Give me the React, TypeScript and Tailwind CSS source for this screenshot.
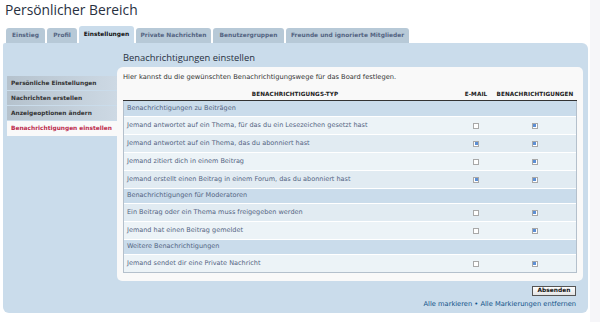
import React from "react";

const tabs = [
  { label: "Einstieg", w: "w-[39px]" },
  { label: "Profil", w: "w-[30px]" },
  { label: "Einstellungen", w: "w-[55px]", active: true },
  { label: "Private Nachrichten", w: "w-[75px]" },
  { label: "Benutzergruppen", w: "w-[71px]" },
  { label: "Freunde und ignorierte Mitglieder", w: "w-[123px]" },
];

const menu = [
  "Persönliche Einstellungen",
  "Nachrichten erstellen",
  "Anzeigeoptionen ändern",
];

type Row =
  | { type: "section"; label: string }
  | { type: "row"; label: string; mail: boolean; notify: boolean; dark: boolean };

const rows: Row[] = [
  { type: "section", label: "Benachrichtigungen zu Beiträgen" },
  { type: "row", label: "Jemand antwortet auf ein Thema, für das du ein Lesezeichen gesetzt hast", mail: false, notify: true, dark: false },
  { type: "row", label: "Jemand antwortet auf ein Thema, das du abonniert hast", mail: true, notify: true, dark: true },
  { type: "row", label: "Jemand zitiert dich in einem Beitrag", mail: false, notify: true, dark: false },
  { type: "row", label: "Jemand erstellt einen Beitrag in einem Forum, das du abonniert hast", mail: true, notify: true, dark: true },
  { type: "section", label: "Benachrichtigungen für Moderatoren" },
  { type: "row", label: "Ein Beitrag oder ein Thema muss freigegeben werden", mail: false, notify: true, dark: true },
  { type: "row", label: "Jemand hat einen Beitrag gemeldet", mail: false, notify: true, dark: false },
  { type: "section", label: "Weitere Benachrichtigungen" },
  { type: "row", label: "Jemand sendet dir eine Private Nachricht", mail: false, notify: true, dark: false },
];

const Check = ({ on }: { on: boolean }) => (
  <span className="w-[6px] h-[6px] border border-[#a8a8a8] bg-white flex items-center justify-center">
    {on && <span className="w-[3px] h-[3px] bg-[#5d8fd4]" />}
  </span>
);

export default function App() {
  return (
    <div className="w-[600px] h-[322px] bg-white flex overflow-hidden font-['DejaVu_Sans',sans-serif]">
      <div className="w-[590px] pl-[3px] pr-[2px]">
        <h1 className="h-[26px] pl-[2px] text-[13.8px] leading-[20px] text-[#28313f] font-['Open_Sans',sans-serif]">
          Persönlicher Bereich
        </h1>

        <div className="flex items-end gap-[2px] pl-[3px] h-[17px]">
          {tabs.map((t) => (
            <div
              key={t.label}
              className={`${t.w} flex items-center justify-center rounded-t-[3px] font-bold text-[5.9px] whitespace-nowrap ${
                t.active ? "h-[17px] bg-[#cadceb] text-[#111]" : "h-[15px] bg-[#b7c9d7] text-[#536482]"
              }`}
            >
              {t.label}
            </div>
          ))}
        </div>

        <div className="h-[270px] bg-[#cadceb] rounded-tr-[6px] rounded-b-[6px] rounded-tl-[2px] flex">
          <div className="w-[114px] pt-[33px] pl-[4px] flex flex-col gap-[1px]">
            {menu.map((m) => (
              <div
                key={m}
                className="h-[14px] pl-[4px] flex items-center bg-gradient-to-r from-[#b5c2cd] to-[#cdd9e4] text-[#333] font-bold text-[5.85px] whitespace-nowrap"
              >
                {m}
              </div>
            ))}
            <div className="h-[15px] w-[111px] pl-[4px] flex items-center bg-[#f9f9f9] text-[#bc2a4d] font-bold text-[5.85px] whitespace-nowrap">
              Benachrichtigungen einstellen
            </div>
          </div>

          <div className="flex-1 pr-[5px]">
            <h2 className="h-[24px] pl-[6px] pt-[9px] text-[9.4px] leading-[12px] text-[#28313f] font-['Open_Sans',sans-serif]">
              Benachrichtigungen einstellen
            </h2>

            <div className="h-[214px] bg-[#f9f9f9] rounded-[5px] rounded-tl-[6px] pl-[6px] pr-[6px] pt-[6px]">
              <p className="h-[15px] text-[6.7px] leading-[8px] text-[#333] whitespace-nowrap">
                Hier kannst du die gewünschten Benachrichtigungswege für das Board festlegen.
              </p>

              <div className="flex h-[13px] items-center border-b border-[#333] font-bold text-[5.7px] text-[#222] tracking-[0.1px]">
                <div className="w-[336px] text-center pl-[8px]">BENACHRICHTIGUNGS-TYP</div>
                <div className="w-[34px] text-center">E-MAIL</div>
                <div className="flex-1 text-center">BENACHRICHTIGUNGEN</div>
              </div>

              <div className="border-x border-b border-[#b4c0cc]">
                {rows.map((r) =>
                  r.type === "section" ? (
                    <div
                      key={r.label}
                      className="h-[15px] pl-[3px] flex items-center bg-[#cadceb] text-[6.5px] text-[#536482] border-t border-white first:border-t-0 whitespace-nowrap"
                    >
                      {r.label}
                    </div>
                  ) : (
                    <div
                      key={r.label}
                      className={`h-[18px] flex items-center text-[6.5px] text-[#536482] border-t border-white ${
                        r.dark ? "bg-[#e1ebf2]" : "bg-[#ecf3f7]"
                      }`}
                    >
                      <div className="w-[335px] pl-[3px] whitespace-nowrap">{r.label}</div>
                      <div className="w-[34px] flex justify-center">
                        <Check on={r.mail} />
                      </div>
                      <div className="flex-1 flex justify-center">
                        <Check on={r.notify} />
                      </div>
                    </div>
                  )
                )}
              </div>
            </div>

            <div className="flex flex-col items-end pr-[7px] pt-[5px]">
              <button className="h-[10px] w-[44px] border border-[#555] bg-gradient-to-b from-white to-[#e4e4e4] text-[5.9px] font-bold text-[#111] leading-none">
                Absenden
              </button>
              <div className="mt-[4px] text-[6.7px] leading-[8px] text-[#105289] whitespace-nowrap">
                Alle markieren • Alle Markierungen entfernen
              </div>
            </div>
          </div>
        </div>
      </div>
      <div className="flex-1 bg-[#f6f6f9]" />
    </div>
  );
}
